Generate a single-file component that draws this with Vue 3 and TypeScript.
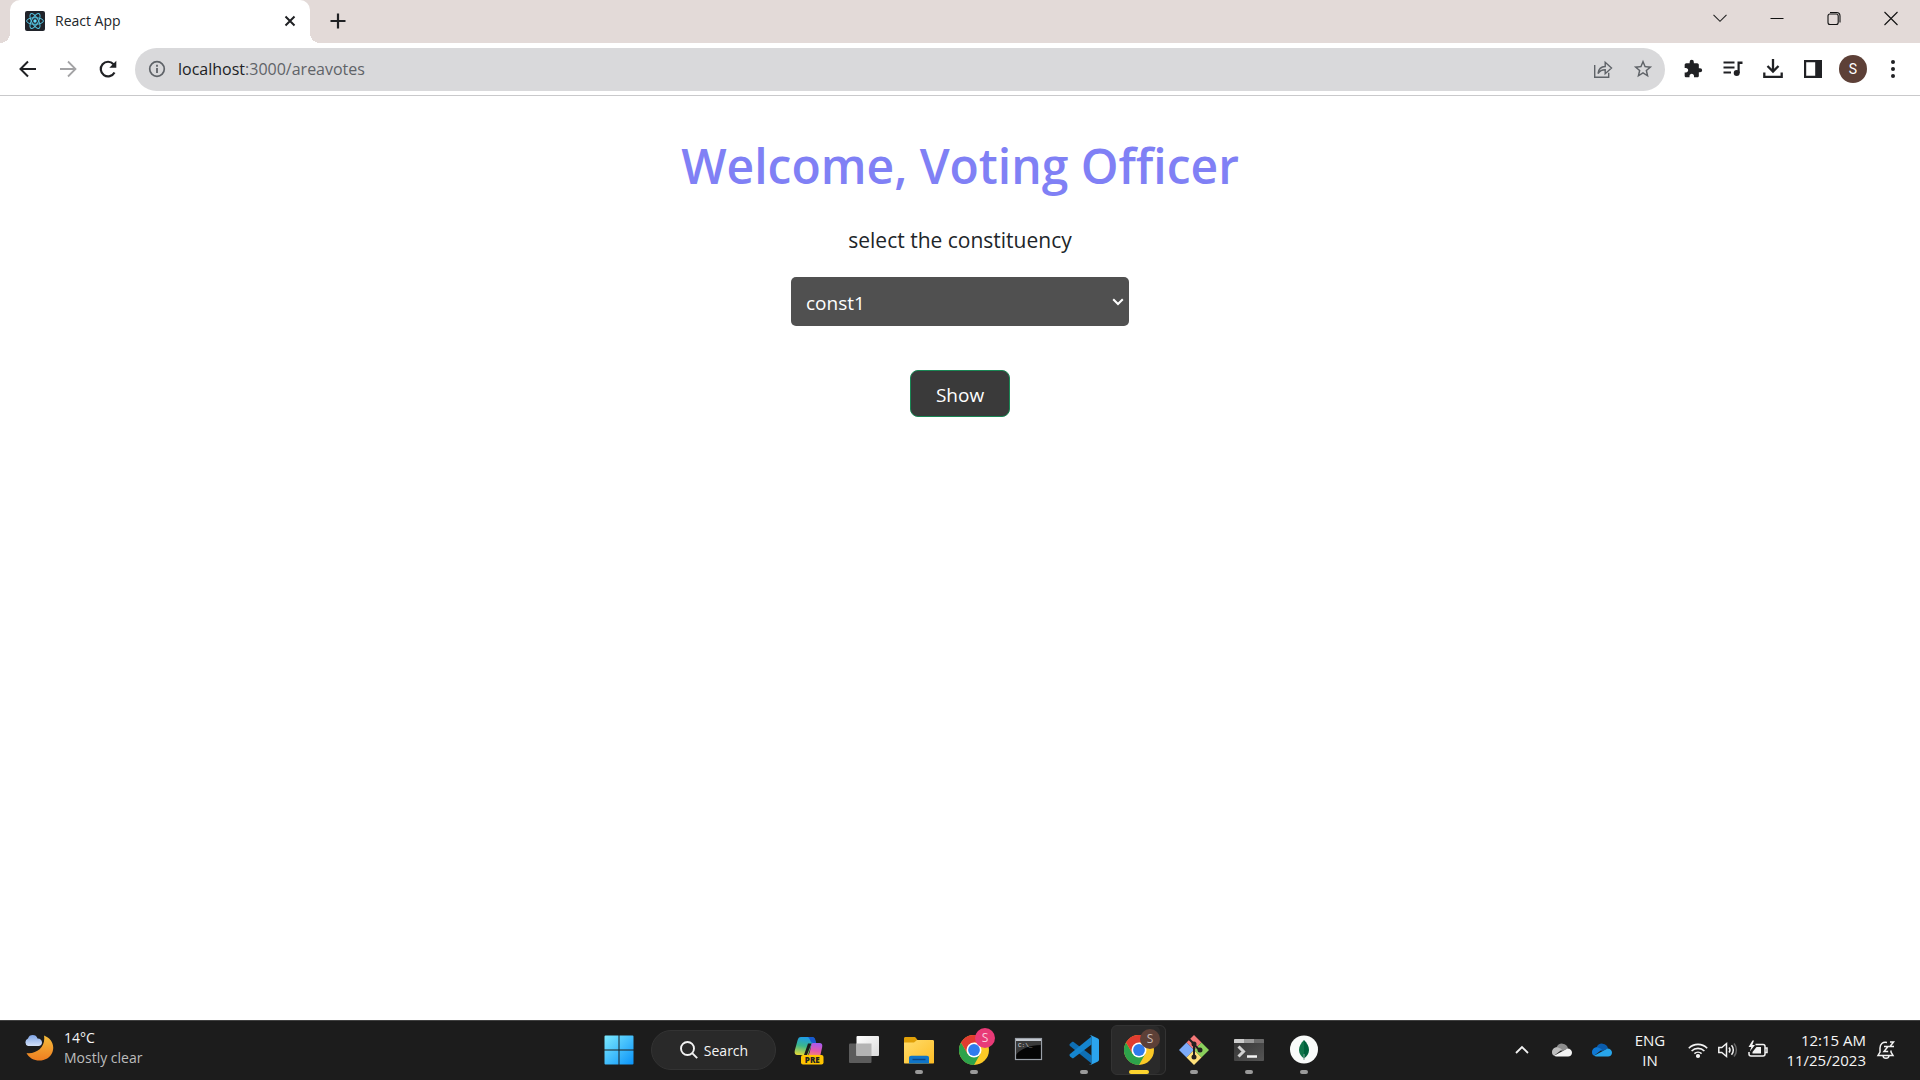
<script setup lang="ts">
import { ref } from 'vue'

const constituencies: string[] = ['const1', 'const2', 'const3']
const selected = ref<string>('const1')
const address = ref<string>('localhost:3000/areavotes')
</script>

<template>
  <div class="screen">
    <header class="tabstrip">
      <div class="tab">
        <svg class="favicon" viewBox="0 0 20 20" width="20" height="20">
          <rect width="20" height="20" rx="2" fill="#20232a" />
          <g fill="none" stroke="#53c1de" stroke-width="1">
            <ellipse cx="10" cy="10" rx="8.4" ry="3.3" />
            <ellipse cx="10" cy="10" rx="8.4" ry="3.3" transform="rotate(60 10 10)" />
            <ellipse cx="10" cy="10" rx="8.4" ry="3.3" transform="rotate(120 10 10)" />
          </g>
          <circle cx="10" cy="10" r="1.7" fill="#61dafb" />
        </svg>
        <span class="tab-title">React App</span>
        <button class="icon-btn tab-close" aria-label="Close tab">
          <svg viewBox="0 0 20 20" width="20" height="20"><path d="M5.500 5.500l9 9M14.500 5.500l-9 9" stroke="#202124" stroke-width="2" /></svg>
        </button>
      </div>
      <button class="icon-btn new-tab" aria-label="New tab">
        <svg viewBox="0 0 20 20" width="20" height="20"><path d="M10 2.500v15M2.500 10h15" stroke="#202124" stroke-width="2.200" /></svg>
      </button>
      <div class="window-controls">
        <button class="icon-btn" aria-label="Search tabs">
          <svg viewBox="0 0 20 20" width="20" height="20"><path d="M3.500 6.800l6.500 6.500 6.500-6.500" fill="none" stroke="#222" stroke-width="1.100" /></svg>
        </button>
        <button class="icon-btn" aria-label="Minimize">
          <svg viewBox="0 0 20 20" width="20" height="20"><path d="M3.500 10.500h13" stroke="#111" /></svg>
        </button>
        <button class="icon-btn" aria-label="Restore">
          <svg viewBox="0 0 20 20" width="20" height="20" fill="none" stroke="#111" stroke-width="1.100"><rect x="4" y="6" width="10.200" height="10.500" rx="2" /><path d="M6 4.500h6.500a3.500 3.500 0 0 1 3.500 3.500v6.500" /></svg>
        </button>
        <button class="icon-btn" aria-label="Close">
          <svg viewBox="0 0 20 20" width="20" height="20"><path d="M3.500 4l13 13M16.500 4l-13 13" stroke="#111" stroke-width="1.100" /></svg>
        </button>
      </div>
    </header>

    <nav class="toolbar">
      <button class="icon-btn nav-btn" aria-label="Back">
        <svg viewBox="0 0 24 24" width="24" height="24" fill="none" stroke="#202124" stroke-width="2"><path d="M20 12H5M12 4.500L4.500 12l7.500 7.500" /></svg>
      </button>
      <button class="icon-btn nav-btn" aria-label="Forward">
        <svg viewBox="0 0 24 24" width="24" height="24" fill="none" stroke="#a3a3a5" stroke-width="1.800"><path d="M4 12h15M12 4.500l7.500 7.500-7.500 7.500" /></svg>
      </button>
      <button class="icon-btn nav-btn" aria-label="Reload">
        <svg viewBox="0 0 24 24" width="24" height="24"><path d="M18.500 15.500A7.300 7.300 0 1 1 17.500 7.200" fill="none" stroke="#202124" stroke-width="2.200" /><path d="M20.300 3.800v7h-7z" fill="#202124" /></svg>
      </button>
      <div class="omnibox">
        <svg viewBox="0 0 18 18" width="18" height="18"><circle cx="9" cy="9" r="7.300" fill="none" stroke="#5f6368" stroke-width="1.700" /><path d="M9 8v5M9 4.800v1.900" stroke="#5f6368" stroke-width="1.800" /></svg>
        <label class="address">
          <span class="address-text" aria-hidden="true"><b>localhost</b>:3000/areavotes</span>
          <input v-model="address" aria-label="Address" />
        </label>
        <button class="icon-btn omni-btn" aria-label="Share">
          <svg viewBox="0 0 24 24" width="24" height="24" fill="none" stroke="#5f6368" stroke-width="1.400"><path d="M3.700 8v12.300h14v-4.500" /><path d="M7 16.500c.5-4.500 3-6.800 7.200-7V5.300l6.300 5.700-6.300 5.700v-3.900c-3.200 0-5.500 1.200-7.200 3.700z" /></svg>
        </button>
        <button class="icon-btn omni-btn" aria-label="Bookmark">
          <svg viewBox="0 0 24 24" width="22" height="22"><path fill="#5f6368" d="M22 9.240l-7.190-.62L12 2 9.190 8.630 2 9.240l5.460 4.730L5.820 21 12 17.270 18.180 21l-1.630-7.030L22 9.240zM12 15.400l-3.760 2.270 1-4.280-3.320-2.880 4.380-.38L12 6.100l1.710 4.040 4.380.38-3.320 2.880 1 4.280L12 15.400z" /></svg>
        </button>
      </div>
      <div class="actions">
        <button class="icon-btn nav-btn" aria-label="Extensions">
          <svg viewBox="0 0 24 24" width="20" height="20"><path fill="#202124" d="M20.500 11H19V7c0-1.100-.9-2-2-2h-4V3.500a2.500 2.500 0 0 0-5 0V5H4c-1.100 0-1.990.9-1.990 2v3.800H3.500c1.490 0 2.700 1.210 2.700 2.700s-1.210 2.700-2.700 2.700H2V20c0 1.100.9 2 2 2h3.800v-1.500c0-1.490 1.210-2.700 2.700-2.700 1.490 0 2.700 1.210 2.700 2.700V22H17c1.100 0 2-.9 2-2v-4h1.500a2.500 2.500 0 0 0 0-5z" /></svg>
        </button>
        <button class="icon-btn nav-btn" aria-label="Media controls">
          <svg viewBox="0 0 24 24" width="24" height="24"><path d="M2.500 5.500h11M2.500 10.500h11M2.500 15.500h7.500" stroke="#202124" stroke-width="2" /><path d="M16.500 16V4.500h5v2.400h-2.800V16" fill="#202124" /><circle cx="15.700" cy="16" r="3" fill="#202124" /></svg>
        </button>
        <button class="icon-btn nav-btn" aria-label="Downloads">
          <svg viewBox="0 0 24 24" width="24" height="24" fill="none" stroke="#202124" stroke-width="2.300"><path d="M12 2v12M6.500 9l5.500 5.500L17.500 9M3.300 15.500v4.300h17.400v-4.300" /></svg>
        </button>
        <button class="icon-btn nav-btn" aria-label="Side panel">
          <svg viewBox="0 0 24 24" width="24" height="24"><path fill="#202124" fill-rule="evenodd" d="M3 3h18v18H3zM5.200 5.200v13.600h9V5.200z" /></svg>
        </button>
        <button class="icon-btn nav-btn" aria-label="Profile"><span class="avatar">S</span></button>
        <button class="icon-btn nav-btn" aria-label="Menu">
          <svg viewBox="0 0 24 24" width="24" height="24" fill="#202124"><circle cx="12" cy="5" r="2" /><circle cx="12" cy="12" r="2" /><circle cx="12" cy="19" r="2" /></svg>
        </button>
      </div>
    </nav>

    <main class="page">
      <h1>Welcome, Voting Officer</h1>
      <label class="prompt" for="constituency">select the constituency</label>
      <div class="select-box">
        <select id="constituency" v-model="selected">
          <option v-for="name in constituencies" :key="name" :value="name">{{ name }}</option>
        </select>
        <svg class="arrow" viewBox="0 0 12 8" width="12" height="8"><path d="M1.200 1.200L6 6l4.800-4.800" fill="none" stroke="#fff" stroke-width="2" /></svg>
      </div>
      <button class="show">Show</button>
    </main>

    <footer class="taskbar">
      <div class="weather">
        <svg viewBox="0 0 30 30" width="30" height="30">
          <defs>
            <linearGradient id="moon" x1="0" y1="0" x2="0" y2="1"><stop offset="0" stop-color="#f5bd3c" /><stop offset="1" stop-color="#ef7d20" /></linearGradient>
            <linearGradient id="cloud" x1="0" y1="0" x2="0" y2="1"><stop offset="0" stop-color="#7fa4e6" /><stop offset="1" stop-color="#d3e1f8" /></linearGradient>
          </defs>
          <path d="M20 2.500c7 2.500 11 9.500 8.500 16.500-4 11-21 11.500-26 1 10 1.500 19.500-6 17.500-17.500z" fill="url(#moon)" />
          <path d="M4 13a4 4 0 0 1 0-7.500 5 5 0 0 1 9.500 0c3 0 4.500 2 4.500 4s-1.500 3.500-3.500 3.500z" fill="url(#cloud)" />
        </svg>
        <div class="weather-text"><span>14°C</span><span class="dim">Mostly clear</span></div>
      </div>

      <div class="apps">
        <button class="app" aria-label="Start">
          <svg viewBox="0 0 30 30" width="30" height="30">
            <defs><linearGradient id="win" x1="0" y1="0" x2="1" y2="1"><stop offset="0" stop-color="#7ceaff" /><stop offset="1" stop-color="#0a93f8" /></linearGradient></defs>
            <path fill="url(#win)" d="M1.500.5h13v14h-14v-13a1 1 0 0 1 1-1zM15.500.5h13a1 1 0 0 1 1 1v13h-14zM.5 15.500h14v14h-13a1 1 0 0 1-1-1zM15.500 15.500h14v13a1 1 0 0 1-1 1h-13z" />
          </svg>
        </button>
        <button class="search">
          <svg viewBox="0 0 20 20" width="20" height="20" fill="none" stroke="#f2f2f2" stroke-width="1.900"><circle cx="8.500" cy="8.500" r="6.500" /><path d="M13.200 13.200l5 5" /></svg>
          <span>Search</span>
        </button>
        <button class="app" aria-label="Copilot">
          <svg viewBox="0 0 30 30" width="30" height="30">
            <defs>
              <linearGradient id="cpa" x1="0.500" y1="0" x2="0.300" y2="1"><stop offset="0" stop-color="#1e9bea" /><stop offset=".5" stop-color="#3bb78c" /><stop offset="1" stop-color="#dfd83a" /></linearGradient>
              <linearGradient id="cpb" x1="0.600" y1="0" x2="0.400" y2="1"><stop offset="0" stop-color="#a65af0" /><stop offset=".6" stop-color="#e55aa9" /><stop offset="1" stop-color="#f58a6b" /></linearGradient>
            </defs>
            <path d="M7 2h10.500c2 0 3 1 3.500 3l.7 3c-3 0-4 1-4.700 3.500L14 20H3.500C1 20 .2 18 .8 15.500L3.500 5.500C4.200 3 5 2 7 2z" fill="url(#cpa)" />
            <path d="M14 2h4c2 0 3 1 3.400 3l.8 3h-3l-2-.5C16 5 15.500 3 14 2z" fill="#1759cf" />
            <path d="M17.500 8.500L13 20h-3l4-11.500z" fill="#1c1c1c" />
            <path d="M19 8h6.500c2.300 0 3.200 1.500 2.700 4l-2 9H12.500c2.500-1 3-3 3.500-5l1.300-6c.3-1.200.8-2 1.700-2z" fill="url(#cpb)" />
            <rect x="7" y="20" width="22.500" height="9.500" rx="2" fill="#ffc400" />
            <text x="18.300" y="27.800" text-anchor="middle" class="pre">PRE</text>
          </svg>
        </button>
        <button class="app" aria-label="Task view">
          <svg viewBox="0 0 30 30" width="30" height="30">
            <defs><linearGradient id="tv" x1="0" y1="0" x2="1" y2="1"><stop offset="0" stop-color="#fff" /><stop offset="1" stop-color="#dadada" /></linearGradient></defs>
            <rect x="0" y="8.500" width="22.500" height="19.500" rx="1" fill="#5c5c5c" />
            <rect x="7.500" y="1" width="22.500" height="20" rx="1" fill="url(#tv)" />
            <path d="M7.500 8.500h15V21h-15z" fill="#b4b4b4" />
          </svg>
        </button>
        <button class="app running" aria-label="File Explorer">
          <svg viewBox="0 0 30 30" width="30" height="30">
            <defs><linearGradient id="fold" x1="0" y1="0" x2="1" y2="1"><stop offset="0" stop-color="#ffdc6b" /><stop offset="1" stop-color="#fdbd25" /></linearGradient></defs>
            <path d="M0 3.500C0 2.500.6 2 1.500 2H10c1 0 1.500.3 2 1l1.500 2-2 5H0z" fill="#e0a008" />
            <path d="M0 7.500h10l3-2.500h15.500c1 0 1.500.5 1.500 1.500v21c0 .6-.3 1-1 1H1c-.7 0-1-.4-1-1z" fill="url(#fold)" />
            <path d="M5 28.500V23c0-1.500.8-2.300 2.300-2.300h15.400c1.500 0 2.300.8 2.300 2.300v5.500z" fill="#0f75c8" />
            <path d="M8.500 24.500h13" stroke="#0a4686" stroke-width="1.400" />
          </svg>
        </button>
        <button class="app running" aria-label="Chrome, first profile">
          <svg viewBox="0 0 30 30" width="30" height="30">
            <circle cx="15" cy="15" r="15" fill="#fbc926" />
            <path d="M8.500 18.500L2 7.500a15 15 0 0 0 13 22.500L21.500 18.500z" fill="#2da34b" />
            <path d="M15 15L8.500 18.500 2 7.500a15 15 0 0 1 26 0H15z" fill="#e13c30" />
            <circle cx="15" cy="15" r="7.500" fill="#fff" /><circle cx="15" cy="15" r="5.900" fill="#2f7bed" />
          </svg>
          <span class="badge pink">S</span>
        </button>
        <button class="app" aria-label="Command Prompt">
          <svg viewBox="0 0 30 30" width="30" height="30">
            <rect x="1.500" y="3.500" width="26" height="21" fill="#050505" stroke="#9aa0a8" stroke-width="1.200" />
            <path d="M2 4h25v2H2z" fill="#c3c8cf" />
            <path d="M2 6h25v4C16 10 6 14 2 20z" fill="#3a3a3a" />
            <text x="4" y="12" class="prompt-glyph">C:\_</text>
          </svg>
        </button>
        <button class="app running" aria-label="Visual Studio Code">
          <svg viewBox="0 0 30 30" width="30" height="30">
            <path d="M1 8.800l2-1.800c.5-.4 1-.4 1.600 0L22.500 20.500v8L1 11c-.7-.7-.7-1.500 0-2.200z" fill="#0e6fb5" />
            <path d="M1 21.200l2 1.800c.5.400 1 .4 1.600 0L22.500 9.500v-8L1 19c-.7.700-.7 1.500 0 2.200z" fill="#1585cf" />
            <path d="M22 .3L28.500 3.300c1 .5 1.500 1 1.500 2.200v19c0 1.200-.5 1.700-1.500 2.200L22 29.700c-.8.300-1.600.1-2.200-.5 1 .8 2.700.200 2.700-1.200V2c0-1.400-1.700-2-2.700-1.200.6-.6 1.400-.8 2.200-.5z" fill="#2ba4ee" />
          </svg>
        </button>
        <button class="app running active" aria-label="Chrome, second profile">
          <svg viewBox="0 0 30 30" width="30" height="30">
            <circle cx="15" cy="15" r="15" fill="#fbc926" />
            <path d="M8.500 18.500L2 7.500a15 15 0 0 0 13 22.500L21.500 18.500z" fill="#2da34b" />
            <path d="M15 15L8.500 18.500 2 7.500a15 15 0 0 1 26 0H15z" fill="#e13c30" />
            <circle cx="15" cy="15" r="7.500" fill="#fff" /><circle cx="15" cy="15" r="5.900" fill="#2f7bed" />
          </svg>
          <span class="badge brown">S</span>
        </button>
        <button class="app running" aria-label="Git Bash">
          <svg viewBox="0 0 30 30" width="30" height="30">
            <path d="M15 0l7.500 7.500L15 15 7.500 7.500z" fill="#f57878" /><path d="M22.500 7.500L30 15l-7.500 7.500L15 15z" fill="#8bd05c" />
            <path d="M7.500 7.500L15 15l-7.500 7.500L0 15z" fill="#7dabf8" /><path d="M15 15l7.500 7.500L15 30l-7.500-7.500z" fill="#ffe07a" />
            <path d="M9.500 3.500L15 9v14M15 9.500l6 6" fill="none" stroke="#231f20" stroke-width="2" />
            <g fill="#231f20"><circle cx="15" cy="9" r="2.500" /><circle cx="15" cy="22" r="2.500" /><circle cx="21" cy="15" r="2.500" /></g>
          </svg>
        </button>
        <button class="app running" aria-label="Terminal">
          <svg viewBox="0 0 30 30" width="30" height="30">
            <defs><linearGradient id="term" x1="0" y1="0" x2="1" y2="1"><stop offset="0" stop-color="#333" /><stop offset="1" stop-color="#555" /></linearGradient></defs>
            <rect y="4" width="30" height="22" rx="1" fill="url(#term)" />
            <path d="M0 8V5a1 1 0 0 1 1-1h9v4z" fill="#ccc" /><path d="M10 4h10v4H10z" fill="#999" /><path d="M20 4h9a1 1 0 0 1 1 1v3H20z" fill="#6b6b6b" />
            <path d="M4.500 11.500l5 5-5 5" fill="none" stroke="#d0d0d0" stroke-width="3" /><path d="M13 21.500h10" stroke="#f4f4f4" stroke-width="2.500" />
          </svg>
        </button>
        <button class="app running" aria-label="MongoDB Compass">
          <svg viewBox="0 0 30 30" width="30" height="30">
            <circle cx="15" cy="14.500" r="14" fill="#f9fbfa" />
            <path d="M15 5c-3 3-5 6-5 10 0 3.500 2 6.500 5 8.500z" fill="#10744a" /><path d="M15 5c3 3 5 6 5 10 0 3.500-2 6.500-5 8.500z" fill="#00613c" />
            <path d="M15 19v6" stroke="#83a99a" />
          </svg>
        </button>
      </div>

      <div class="tray">
        <button class="icon-btn tray-btn" aria-label="Show hidden icons">
          <svg viewBox="0 0 20 20" width="20" height="20"><path d="M4 13l6-6 6 6" fill="none" stroke="#f2f2f2" stroke-width="1.800" /></svg>
        </button>
        <button class="icon-btn tray-btn" aria-label="OneDrive, signed out">
          <svg viewBox="0 0 20 14" width="20" height="14"><path d="M4.500 4.500a6 6 0 0 1 11.500 1L10 8 4 5z" fill="#8d8d8d" /><path d="M0 9.500C0 6.500 2 4.300 4.800 4.300c1.700 0 3 1 5.200 2.200L2 12.700C.8 12 0 11 0 9.500z" fill="#bdbdbd" /><path d="M2 12.800L15.500 5.500C18 5.500 20 7.300 20 9.700S18.300 13.500 16 13.500H4.500c-1 0-1.800-.2-2.500-.7z" fill="#f3f3f3" /></svg>
        </button>
        <button class="icon-btn tray-btn" aria-label="OneDrive">
          <svg viewBox="0 0 20 14" width="20" height="14"><path d="M4.500 4.500a6 6 0 0 1 11.500 1L10 8 4 5z" fill="#0a5cad" /><path d="M0 9.500C0 6.500 2 4.300 4.800 4.300c1.700 0 3 1 5.200 2.200L2 12.700C.8 12 0 11 0 9.500z" fill="#0f78d4" /><path d="M2 12.800L15.500 5.500C18 5.500 20 7.300 20 9.700S18.300 13.500 16 13.500H4.500c-1 0-1.800-.2-2.500-.7z" fill="#28a5ea" /></svg>
        </button>
        <button class="language"><span>ENG</span><span>IN</span></button>
        <button class="system" aria-label="Network, volume and battery">
          <svg viewBox="0 0 20 20" width="20" height="20" fill="none" stroke="#f2f2f2" stroke-width="1.600"><path d="M.8 8.200a13 13 0 0 1 18.400 0M3.600 11a9 9 0 0 1 12.800 0M6.400 13.700a5.200 5.200 0 0 1 7.200 0" /><circle cx="10" cy="16" r="1.300" fill="#f2f2f2" /></svg>
          <svg viewBox="0 0 20 20" width="20" height="20" fill="none" stroke="#f2f2f2" stroke-width="1.500"><path d="M.8 7.500h3L8.500 3.500v13l-4.700-4h-3z" /><path d="M11 7.500a4 4 0 0 1 0 5M13.500 5.300a7 7 0 0 1 0 9.400" /><path d="M16 3.500a10 10 0 0 1 0 13" stroke="#666" /></svg>
          <svg viewBox="0 0 20 20" width="20" height="20"><path d="M7.500 4.500h7.500a2 2 0 0 1 2 2v7.500a2 2 0 0 1-2 2H3a2 2 0 0 1-2-2v-2M17.500 8h1.500v4.500h-1.500" fill="none" stroke="#f2f2f2" stroke-width="1.500" /><path d="M8.500 7H13v6.500H4.500V12z" fill="#f2f2f2" /><path d="M4.500.5L.5 7h2.800L1.800 11.500 7 5H4.300L6 .5z" fill="#f2f2f2" /></svg>
        </button>
        <button class="clock"><span>12:15 AM</span><span>11/25/2023</span></button>
        <button class="icon-btn bell" aria-label="Notifications">
          <svg viewBox="0 0 20 20" width="20" height="20" fill="none" stroke="#f2f2f2" stroke-width="1.500"><path d="M11 2.500C6.500 1.500 4 4.500 4 8v4l-2 3.500h15L15 12v-1.500M7 16c.5 3 5.500 3 6 0M8 6.500h4l-4 5h4.200M14 2h3.500L14 6.500h4" /></svg>
        </button>
      </div>
    </footer>
  </div>
</template>

<style>
body {
  margin: 0;
}
</style>

<style scoped>
.screen {
  display: flex;
  flex-direction: column;
  min-height: 100vh;
  background: #fff;
  color: #212529;
  font-family: 'Open Sans', 'Noto Sans', sans-serif;
}

button,
select,
input {
  font-family: inherit;
}

button {
  border: 0;
  padding: 0;
  background: none;
  color: inherit;
}

svg {
  display: block;
  flex: none;
}

.icon-btn {
  display: flex;
  align-items: center;
  justify-content: center;
}

.tabstrip {
  display: flex;
  height: 43px;
  padding-left: 10px;
  background: #e3dad8;
}

.tab {
  position: relative;
  display: flex;
  align-items: center;
  box-sizing: border-box;
  width: 300px;
  padding: 0 10px 2px 15px;
  border-radius: 10px 10px 0 0;
  background: #fff;
}

.tab::before,
.tab::after {
  content: '';
  position: absolute;
  bottom: 0;
  width: 10px;
  height: 10px;
}

.tab::before {
  right: 100%;
  background: radial-gradient(circle at 0 0, transparent 10px, #fff 10px);
}

.tab::after {
  left: 100%;
  background: radial-gradient(circle at 100% 0, transparent 10px, #fff 10px);
}

.tab-title {
  flex: 1;
  padding-left: 10px;
  font-size: 14px;
  line-height: 20px;
}

.new-tab {
  width: 55px;
  padding-bottom: 2px;
}

.window-controls {
  display: flex;
  height: 36px;
  margin-left: auto;
  padding-right: 1px;
}

.window-controls .icon-btn {
  width: 57px;
}

.toolbar {
  display: flex;
  align-items: center;
  height: 52px;
  padding-left: 8px;
  border-bottom: 1px solid #c9c9cb;
}

.nav-btn {
  width: 40px;
  height: 40px;
}

.omnibox {
  display: flex;
  flex: 1;
  align-items: center;
  height: 43px;
  margin-left: 7px;
  padding: 0 2px 0 13px;
  border-radius: 22px;
  background: #d9d9db;
}

.address {
  position: relative;
  flex: 1;
  margin-left: 12px;
  color: #5f6368;
  font-size: 16px;
  line-height: 24px;
}

.address b {
  color: #202124;
  font-weight: 400;
}

.address input {
  position: absolute;
  inset: 0;
  width: 100%;
  border: 0;
  padding: 0;
  background: none;
  color: transparent;
  font-size: 16px;
  outline: 0;
}

.omni-btn {
  width: 40px;
  height: 40px;
}

.actions {
  display: flex;
  padding: 0 7px 0 8px;
}

.avatar {
  width: 28px;
  border-radius: 14px;
  background: #5d4037;
  color: #fff;
  font-family: Roboto, sans-serif;
  font-size: 14px;
  line-height: 28px;
  text-align: center;
}

.page {
  display: flex;
  flex: 1;
  flex-direction: column;
  align-items: center;
  padding-top: 40px;
}

h1 {
  margin: 0;
  color: #8080f5;
  font-size: 48px;
  font-weight: 600;
  line-height: 60px;
}

.prompt {
  margin: 26px 0 19px;
  font-size: 21px;
  line-height: 36px;
}

.select-box {
  position: relative;
}

select {
  display: block;
  box-sizing: border-box;
  width: 338px;
  height: 49px;
  border: 0;
  border-radius: 5px;
  padding: 2px 32px 0 15px;
  background: #505050;
  color: #fff;
  font-size: 19px;
  appearance: none;
}

.arrow {
  position: absolute;
  top: 21px;
  right: 5px;
  pointer-events: none;
}

.show {
  width: 100px;
  height: 47px;
  margin-top: 44px;
  border: 1px solid #198754;
  border-radius: 8px;
  padding-top: 2px;
  background: #3a3a3a;
  color: #fff;
  font-size: 19px;
}

.taskbar {
  display: grid;
  grid-template-columns: 1fr auto 1fr;
  align-items: center;
  height: 60px;
  background: #1c1c1c;
  box-shadow: inset 0 1px #404040;
  color: #f5f5f5;
}

.weather {
  display: flex;
  align-items: center;
  gap: 10px;
  padding: 0 0 4px 24px;
}

.weather-text,
.language,
.clock {
  display: flex;
  flex-direction: column;
  font-size: 14px;
  line-height: 20px;
}

.dim {
  color: #bdbdbd;
}

.apps {
  display: flex;
  align-items: center;
  padding-left: 2px;
}

.app {
  position: relative;
  display: flex;
  align-items: center;
  justify-content: center;
  width: 55px;
  height: 50px;
}

.running::after {
  content: '';
  position: absolute;
  bottom: 1px;
  width: 8px;
  height: 4px;
  border-radius: 2px;
  background: #9a9a9a;
}

.active {
  box-sizing: border-box;
  border: 1px solid #333;
  border-radius: 6px;
  background: #2a2a2a;
  box-shadow: inset -5px 0 #222;
}

.active::after {
  bottom: 0;
  width: 20px;
  background: #fdd42f;
}

.badge {
  position: absolute;
  top: 3px;
  right: 6px;
  width: 20px;
  border-radius: 10px;
  font-size: 12px;
  line-height: 20px;
  text-align: center;
}

.pink {
  background: #e83a77;
  color: #f9c9da;
}

.brown {
  right: 5px;
  background: #5d4037;
  color: #c9bcb8;
}

.pre {
  fill: #222;
  font-size: 8px;
  font-weight: 800;
}

.prompt-glyph {
  fill: #ddd;
  font-family: 'Liberation Mono', monospace;
  font-size: 6px;
}

.search {
  display: flex;
  align-items: center;
  justify-content: center;
  gap: 5px;
  box-sizing: border-box;
  width: 125px;
  height: 40px;
  margin: 0 5px;
  border: 1px solid #333;
  border-radius: 20px;
  background: #292929;
  font-size: 14px;
}

.tray {
  display: flex;
  align-items: center;
  justify-content: flex-end;
  padding-right: 24px;
}

.tray-btn {
  width: 40px;
  height: 40px;
}

.language,
.clock {
  padding-bottom: 1px;
  font-size: 15px;
}

.language {
  align-items: center;
  width: 56px;
}

.system {
  display: flex;
  gap: 10px;
  padding: 0 10px;
}

.clock {
  align-items: flex-end;
  width: 88px;
}

.bell {
  width: 20px;
  margin-left: 10px;
}
</style>
